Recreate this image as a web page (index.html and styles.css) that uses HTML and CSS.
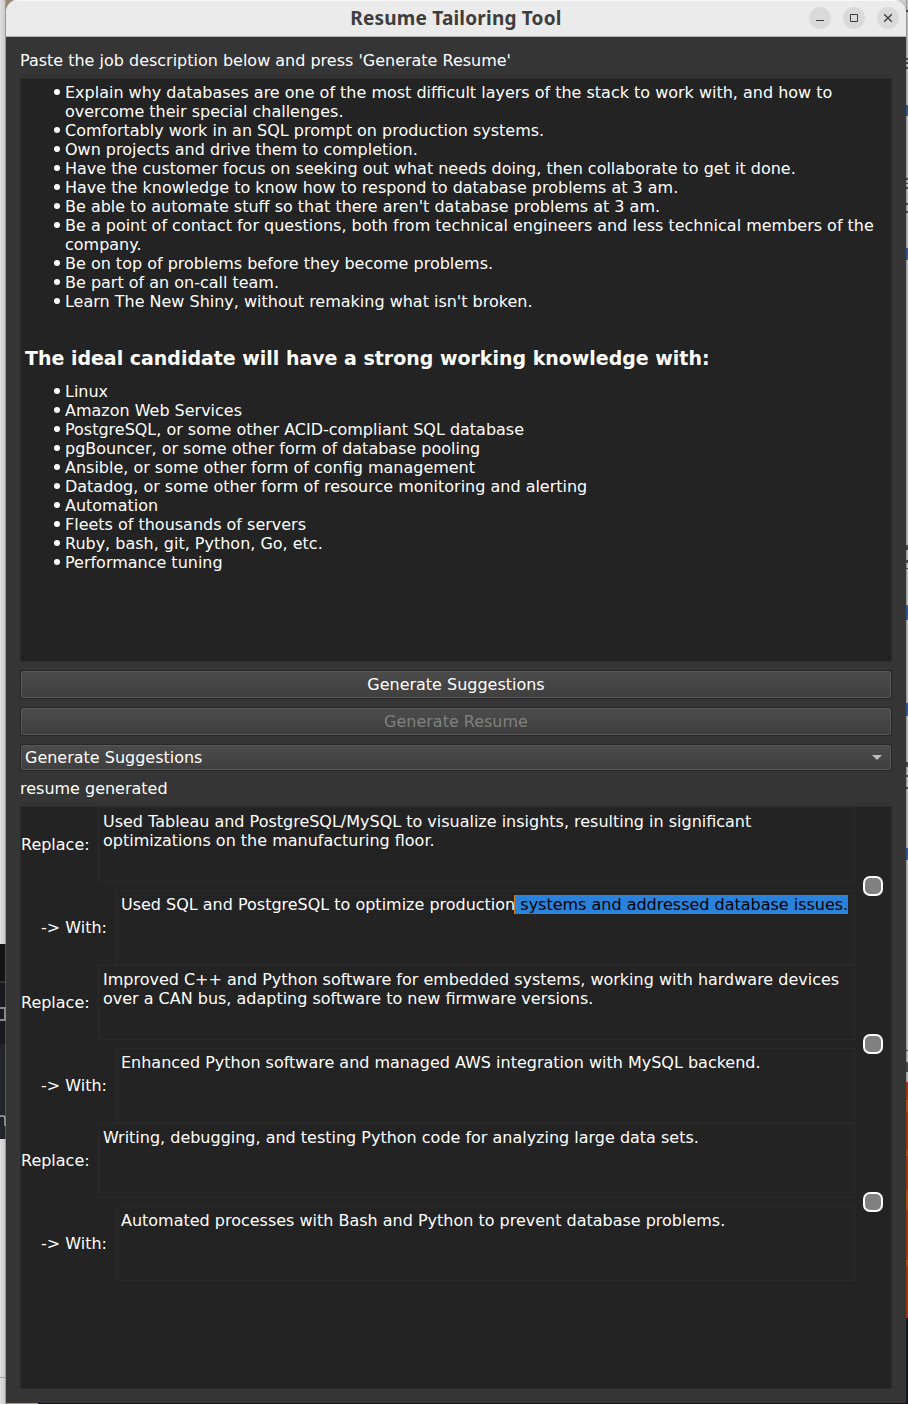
FILE: index.html
```
<!DOCTYPE html>
<html lang="en">
<head>
<meta charset="utf-8">
<title>Resume Tailoring Tool</title>
<link rel="stylesheet" href="styles.css">
</head>
<body>
<div class="desktop">
  <svg class="edge-left" width="6" height="1404" viewBox="0 0 6 1404" shape-rendering="crispEdges">
    <defs><linearGradient id="shade"><stop offset="0" stop-color="#e0e0e0"/><stop offset=".8" stop-color="#cacaca"/><stop offset="1" stop-color="#a0a0a0"/></linearGradient></defs>
    <rect width="6" height="1404" fill="url(#shade)"/>
    <rect y="944" width="6" height="38" fill="#131313"/>
    <rect y="981" width="6" height="2" fill="#2c3034"/>
    <rect y="983" width="6" height="61" fill="#19191f"/>
    <rect y="1044" width="6" height="95" fill="#23232a"/>
    <path d="M0 1008H5V1020H0" fill="none" stroke="#888" stroke-width="2"/>
    <path d="M0 1116H3Q5 1116 5 1119V1126" fill="none" stroke="#aaa" stroke-width="1.500" shape-rendering="auto"/>
    <path d="M0 1377.500H6" stroke="#a0a0a0"/>
    <path d="M5.500 0V1404" stroke="#888" opacity=".5"/>
  </svg>
  <main class="window">
    <header class="titlebar">
      <h1 class="title">Resume Tailoring Tool</h1>
      <div class="controls">
        <svg class="control" viewBox="0 0 22 22"><circle cx="11" cy="11" r="11"/><path d="M7 13.500H15"/></svg>
        <svg class="control" viewBox="0 0 22 22"><circle cx="11" cy="11" r="11"/><path d="M7.500 7.500H14.500V14.500H7.500Z"/></svg>
        <svg class="control" viewBox="0 0 22 22"><circle cx="11" cy="11" r="11"/><path d="M7.200 7.200L14.800 14.800M14.800 7.200L7.200 14.800" stroke-width="1.400"/></svg>
      </div>
    </header>
    <div class="content">
      <p class="label">Paste the job description below and press 'Generate Resume'</p>
      <section class="panel description">
        <ul class="list">
          <li>Explain why databases are one of the most difficult layers of the stack to work with, and how to overcome their special challenges.</li>
          <li>Comfortably work in an SQL prompt on production systems.</li>
          <li>Own projects and drive them to completion.</li>
          <li>Have the customer focus on seeking out what needs doing, then collaborate to get it done.</li>
          <li>Have the knowledge to know how to respond to database problems at 3 am.</li>
          <li>Be able to automate stuff so that there aren't database problems at 3 am.</li>
          <li>Be a point of contact for questions, both from technical engineers and less technical members of the company.</li>
          <li>Be on top of problems before they become problems.</li>
          <li>Be part of an on-call team.</li>
          <li>Learn The New Shiny, without remaking what isn't broken.</li>
        </ul>
        <h2 class="heading">The ideal candidate will have a strong working knowledge with:</h2>
        <ul class="list">
          <li>Linux</li>
          <li>Amazon Web Services</li>
          <li>PostgreSQL, or some other ACID-compliant SQL database</li>
          <li>pgBouncer, or some other form of database pooling</li>
          <li>Ansible, or some other form of config management</li>
          <li>Datadog, or some other form of resource monitoring and alerting</li>
          <li>Automation</li>
          <li>Fleets of thousands of servers</li>
          <li>Ruby, bash, git, Python, Go, etc.</li>
          <li>Performance tuning</li>
        </ul>
      </section>
      <button class="button">Generate Suggestions</button>
      <button class="button button-disabled" disabled>Generate Resume</button>
      <div class="button select">
        <span>Generate Suggestions</span>
        <svg class="arrow" viewBox="0 0 10 5"><path d="M0 0H10L5 5Z" fill="#bcbcbc"/></svg>
      </div>
      <p class="status">resume generated</p>
      <section class="panel suggestions">
        <div class="pair">
          <div class="fields">
            <div class="row"><span class="name">Replace:</span><div class="field">Used Tableau and PostgreSQL/MySQL to visualize insights, resulting in significant optimizations on the manufacturing floor.</div></div>
            <div class="row row-with"><span class="name">-&gt; With:</span><div class="field">Used SQL and PostgreSQL to optimize production<span class="selected"> systems and addressed database issues.</span></div></div>
          </div>
          <span class="check"></span>
        </div>
        <div class="pair">
          <div class="fields">
            <div class="row"><span class="name">Replace:</span><div class="field">Improved C++ and Python software for embedded systems, working with hardware devices over a CAN bus, adapting software to new firmware versions.</div></div>
            <div class="row row-with"><span class="name">-&gt; With:</span><div class="field">Enhanced Python software and managed AWS integration with MySQL backend.</div></div>
          </div>
          <span class="check"></span>
        </div>
        <div class="pair">
          <div class="fields">
            <div class="row"><span class="name">Replace:</span><div class="field">Writing, debugging, and testing Python code for analyzing large data sets.</div></div>
            <div class="row row-with"><span class="name">-&gt; With:</span><div class="field">Automated processes with Bash and Python to prevent database problems.</div></div>
          </div>
          <span class="check"></span>
        </div>
      </section>
    </div>
  </main>
  <svg class="edge-right" width="2" height="1404" viewBox="0 0 2 1404" shape-rendering="crispEdges">
    <rect width="2" height="1404" fill="#bcbcbc"/>
    <rect width="1" height="1082" fill="#999"/>
    <path d="M1 10V12M1 58V60M1 62V64M1 67V69M1 178V180M1 183V184M1 187V189M1 203V205M1 211V213M1 545V550M1 560V563M1 568V569M1 762V767M1 775V777M1 787V789M1 1050V1051M1 1062V1072" stroke="#444" stroke-width="2"/>
    <path d="M1 105V116M1 248V260M1 605V620M1 703V716M1 848V860" stroke="#34558c" stroke-width="2"/>
    <rect y="1082" width="2" height="236" fill="#963515"/>
    <path d="M1 1100V1112M1 1150V1156M1 1190V1210M1 1260V1266" stroke="#a8481a" stroke-width="2"/>
    <rect y="1318" width="2" height="86" fill="#15171c"/>
  </svg>
</div>
</body>
</html>
```
FILE: styles.css
```
* { box-sizing: border-box; }

body {
  margin: 0;
  font: 15.990px/19px "DejaVu Sans", sans-serif;
  color: #fff;
  overflow: hidden;
}

h1, h2, p, ul { margin: 0; padding: 0; }

.desktop {
  display: flex;
  height: 1404px;
  background:
    linear-gradient(#968871, #968871) 0 0 / 40px 20px no-repeat,
    linear-gradient(#ccc, #ccc) 100% 0 / 40px 20px no-repeat,
    linear-gradient(90deg, #a09888 0 38px, #151015 38px);
}

.edge-left, .edge-right { display: block; flex: none; }

.window {
  flex: 1;
  min-width: 0;
  height: 1403px;
  background: #353535;
  border-radius: 11px 11px 0 0;
  overflow: hidden;
}

.titlebar {
  display: grid;
  grid-template-columns: 1fr auto 1fr;
  align-items: center;
  height: 37px;
  padding: 0 7px 2px 7px;
  background: #ebebeb;
  border-top: 1px solid #f8f8f8;
  border-bottom: 1px solid #b5b5b5;
}

.title {
  grid-column: 2;
  font: bold 19px/24px "Noto Sans", sans-serif;
  letter-spacing: 0.2px;
  color: #3d3d3d;
}

.controls {
  display: flex;
  justify-content: flex-end;
  gap: 12px;
}

.control { width: 22px; height: 22px; fill: none; stroke: #3d3d3d; }
.control circle { fill: #dadada; stroke: none; }

.content {
  display: flex;
  flex-direction: column;
  padding: 14px 14px 0;
}

.label { height: 27px; }

.panel {
  background: #232323;
  border: 1px solid #2b2b2b;
}

.description { height: 584px; padding: 4px; }

.list { list-style: none; padding-left: 40px; }

.list li::before {
  content: "";
  float: left;
  width: 6px;
  height: 6px;
  margin: 6px 0 0 -11px;
  border-radius: 50%;
  background: #fff;
}

.heading {
  margin: 36px 0 12px;
  font-size: 18.980px;
  line-height: 23px;
}

.button {
  display: flex;
  align-items: center;
  justify-content: center;
  height: 27px;
  margin: 9px 1px 0;
  padding: 0 4px;
  font: inherit;
  color: #fff;
  background: linear-gradient(#4b4b4b, #3f3f3f);
  border: 1px solid #585858;
  border-radius: 2px;
  box-shadow: 0 0 0 1px #262626;
}

.button + .button { margin-top: 10px; }
.button-disabled { color: #808080; }
.button + .select { height: 25px; justify-content: space-between; padding: 0 8px 0 3px; }
.arrow { width: 10px; height: 5px; }

.status { margin: 9px 0 8px; }

.suggestions { height: 583px; }

.pair {
  display: flex;
  align-items: center;
  gap: 8px;
  height: 158px;
}

.fields {
  display: flex;
  flex-direction: column;
  gap: 8px;
  width: 834px;
}

.row { display: flex; align-items: center; }
.name { width: 77px; }
.row-with { padding-left: 20px; }
.row-with .name { width: 75px; }

.field {
  flex: 1;
  height: 75px;
  padding: 4px;
  border: 1px solid #2a2a2a;
}

.selected {
  color: #000;
  background: #2a82da;
  box-shadow: -1px 0 #d57d25;
}

.check {
  width: 20px;
  height: 20px;
  background: #808080;
  border: 2px solid #fff;
  border-radius: 7px;
}
```
